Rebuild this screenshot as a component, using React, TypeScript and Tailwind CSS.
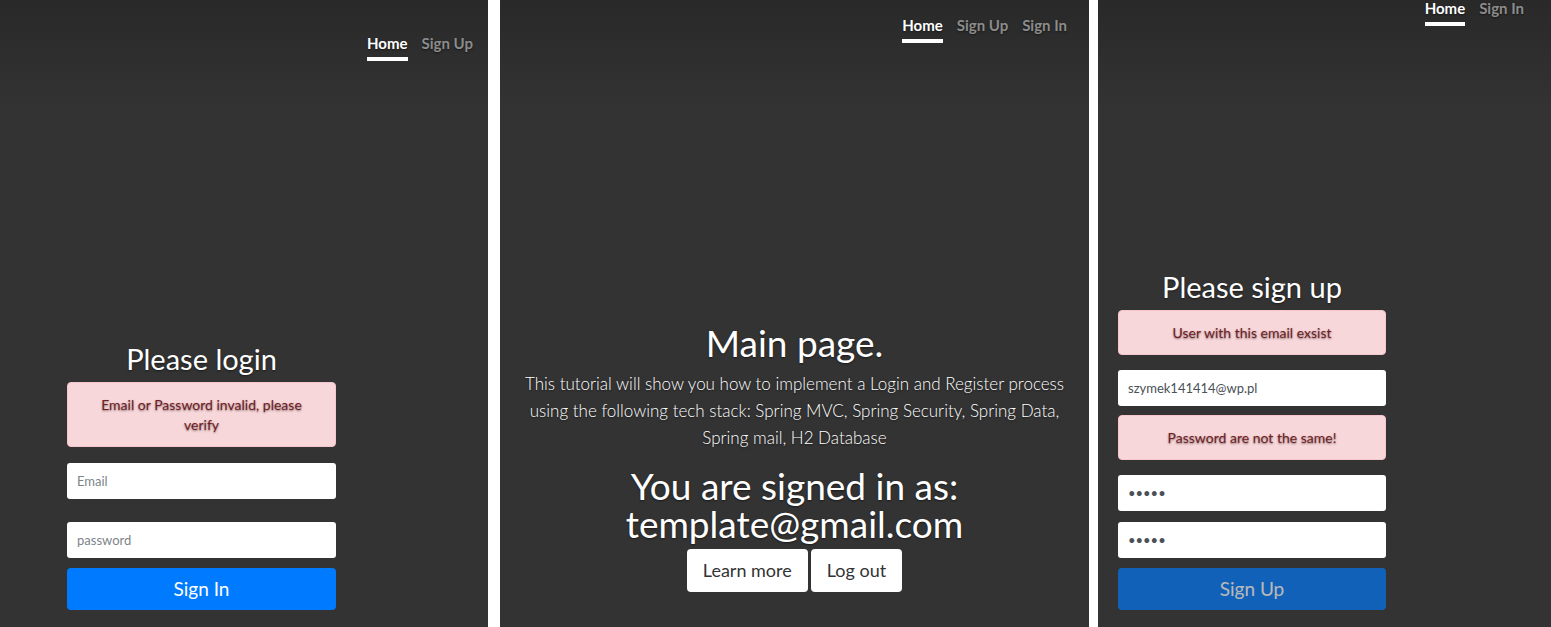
const font = "font-['Lato','Open_Sans',sans-serif]";
const shadow = "[text-shadow:0_1px_2px_rgba(0,0,0,0.5)]";
const panelBg = "bg-[linear-gradient(to_bottom,#292929,#333333_110px)]";

function Nav({ items, active = "Home" }: { items: string[]; active?: string }) {
  return (
    <nav className="flex justify-end gap-[14px]">
      {items.map((label) => (
        <a
          key={label}
          href="#"
          className={`pt-1 pb-[3px] border-b-4 text-[15px] leading-[21px] font-bold ${
            label === active ? "text-white border-white" : "text-[#8c8c8c] border-transparent"
          }`}
        >
          {label}
        </a>
      ))}
    </nav>
  );
}

function Alert({ children, className = "" }: { children: React.ReactNode; className?: string }) {
  return (
    <div
      className={`bg-[#f8d7da] border border-[#f5c6cb] text-[#721c24] rounded text-[14px] leading-[20px] text-center px-5 py-[11.5px] ${className}`}
    >
      {children}
    </div>
  );
}

function Field({ value, placeholder, type = "text" }: { value?: string; placeholder?: string; type?: string }) {
  return (
    <input
      readOnly
      type={type}
      defaultValue={value}
      placeholder={placeholder}
      className="block w-full h-[36px] bg-white rounded-[3px] px-[10px] text-[13px] text-[#495057] placeholder:text-[#7d848b] outline-none [text-shadow:none]"
    />
  );
}

export default function App() {
  return (
    <div className={`flex w-[1551px] h-[627px] bg-white overflow-hidden ${font} ${shadow}`}>
      {/* Login */}
      <section className={`w-[488px] h-full flex flex-col ${panelBg}`}>
        <div className="pt-[29px] pr-[15px]">
          <Nav items={["Home", "Sign Up"]} />
        </div>
        <div className="ml-[67px] w-[269px] mt-[279px]">
          <h2 className="text-[29px] leading-[38px] text-white text-center">Please login</h2>
          <Alert className="mt-[4px]">Email or Password invalid, please verify</Alert>
          <div className="mt-[16px]">
            <Field placeholder="Email" />
          </div>
          <div className="mt-[23px]">
            <Field placeholder="password" type="password" />
          </div>
          <button className="mt-[10px] w-full h-[42px] rounded bg-[#007bff] text-white text-[19px]">
            Sign In
          </button>
        </div>
      </section>

      {/* Main page */}
      <section className={`w-[589px] ml-[12px] h-full flex flex-col ${panelBg}`}>
        <div className="pt-[11px] pr-[22px]">
          <Nav items={["Home", "Sign Up", "Sign In"]} />
        </div>
        <div className="mt-[276px] px-[12px] text-center text-white">
          <h1 className="text-[37px] leading-[48px]">Main page.</h1>
          <p className="mt-[3px] text-[17px] leading-[27px] font-light">
            This tutorial will show you how to implement a Login and Register process using the following tech stack:
            Spring MVC, Spring Security, Spring Data, Spring mail, H2 Database
          </p>
          <h1 className="mt-[16px] text-[37px] leading-[38px]">
            <span className="block">You are signed in as:</span>
            <span className="block">template@gmail.com</span>
          </h1>
          <div className="mt-[6px] flex justify-center gap-[3px]">
            <button className="h-[43px] px-[16px] bg-white rounded text-[#333] text-[18px] [text-shadow:none]">
              Learn more
            </button>
            <button className="h-[43px] px-[16px] bg-white rounded text-[#333] text-[18px] [text-shadow:none]">
              Log out
            </button>
          </div>
        </div>
      </section>

      {/* Sign up */}
      <section className={`w-[453px] ml-[9px] h-full flex flex-col ${panelBg}`}>
        <div className="-mt-[6px] pr-[27px]">
          <Nav items={["Home", "Sign In"]} />
        </div>
        <div className="ml-[20px] w-[268px] mt-[242px]">
          <h2 className="text-[29px] leading-[38px] text-white text-center">Please sign up</h2>
          <Alert className="mt-[4px]">User with this email exsist</Alert>
          <div className="mt-[15px]">
            <Field value="szymek141414@wp.pl" />
          </div>
          <Alert className="mt-[9px]">Password are not the same!</Alert>
          <div className="mt-[15px]">
            <Field value="12345" type="password" />
          </div>
          <div className="mt-[11px]">
            <Field value="12345" type="password" />
          </div>
          <button disabled className="mt-[10px] w-full h-[42px] rounded bg-[#007bff] opacity-65 text-white text-[19px]">
            Sign Up
          </button>
        </div>
      </section>
    </div>
  );
}
